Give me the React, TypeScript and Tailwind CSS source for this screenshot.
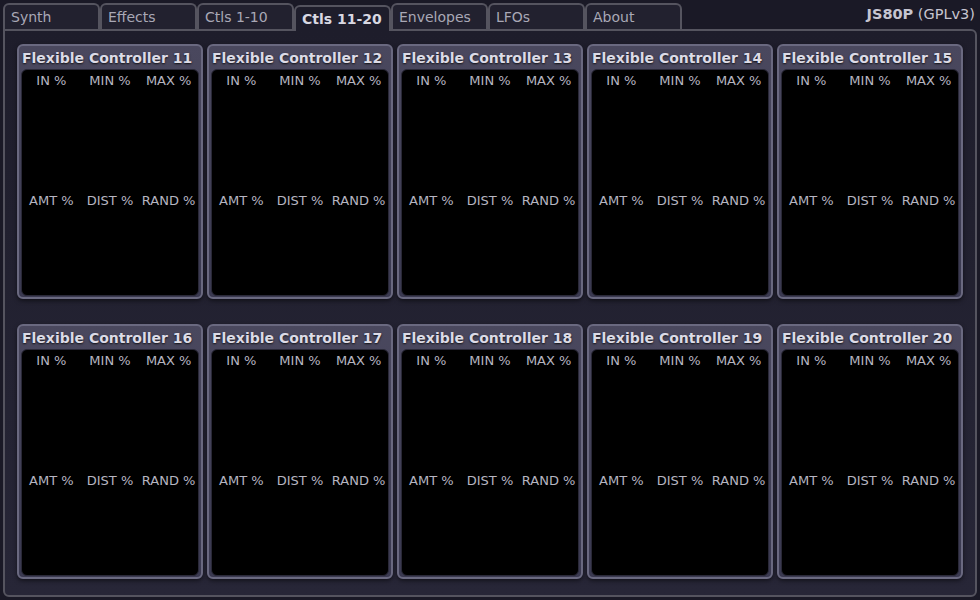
import { memo } from "react"

const tabs = ["Synth", "Effects", "Ctls 1-10", "Ctls 11-20", "Envelopes", "LFOs", "About"]
const active = "Ctls 11-20"

const font = { fontFamily: '"DejaVu Sans", Verdana, sans-serif' }

function ControllerCard({ n }: { n: number }) {
	return (
		<div className="h-[255px] flex flex-col rounded-[6px] border-2 border-[#6a6980] bg-gradient-to-b from-[#4a485e] to-[#3a3950] shadow-[0_2px_4px_rgba(0,0,0,0.5)]">
			{/* Title */}
			<div className="h-[23px] pl-[3px] pt-[2px] text-[14px] font-bold leading-[20px] text-[#dcdbe6] [text-shadow:0_1px_2px_rgba(0,0,0,0.8)] whitespace-nowrap">
				Flexible Controller {n}
			</div>
			{/* Knob area */}
			<div className="flex-1 mx-[2px] mb-[1px] rounded-[6px] bg-black border border-[#2a2938] flex flex-col">
				<div className="h-[120px] grid grid-cols-3 pt-[3px] text-[13px] leading-[16px] text-[#b6b5c0]">
					<span className="text-center">IN %</span>
					<span className="text-center">MIN %</span>
					<span className="text-center">MAX %</span>
				</div>
				<div className="grid grid-cols-3 pt-[3px] text-[13px] leading-[16px] text-[#b6b5c0]">
					<span className="text-center">AMT %</span>
					<span className="text-center">DIST %</span>
					<span className="text-center">RAND %</span>
				</div>
			</div>
		</div>
	)
}

function App() {
	return (
		<div className="w-[980px] h-[600px] bg-[#1a1926] overflow-hidden flex flex-col" style={font}>
			{/* Tabs */}
			<div className="flex items-end pl-[3px] pt-[3px] h-[29px] relative">
				{tabs.map((t) => (
					<div
						key={t}
						className={
							t === active
								? "w-[97px] h-[26px] -mb-[2px] z-10 rounded-t-[6px] border-2 border-b-0 border-[#55545f] bg-[#1e1d2b] pl-[6px] pt-[3px] text-[14px] font-bold leading-[18px] text-[#d8d8e2]"
								: "w-[97px] h-[26px] rounded-t-[6px] border-2 border-b-0 border-[#55545f] bg-[#22212f] pl-[6px] pt-[3px] text-[14px] leading-[18px] text-[#a9a8b6]"
						}>
						{t}
					</div>
				))}
				<div className="ml-auto self-start pt-[1px] pr-[5px] text-[14.5px] text-[#c6c5d0]">
					<span className="font-bold">JS80P</span> (GPLv3)
				</div>
			</div>
			{/* Panel */}
			<div className="mx-[3px] mb-[3px] flex-1 rounded-b-[6px] rounded-tr-[6px] border-2 border-[#55545f] bg-gradient-to-b from-[#1e1d2b] to-[#272637] px-[12px] pt-[13px]">
				<div className="grid grid-cols-5 gap-x-[4px] gap-y-[25px] w-[946px]">
					{Array.from({ length: 10 }, (_, i) => (
						<ControllerCard key={i} n={11 + i} />
					))}
				</div>
			</div>
		</div>
	)
}

export default memo(App)
